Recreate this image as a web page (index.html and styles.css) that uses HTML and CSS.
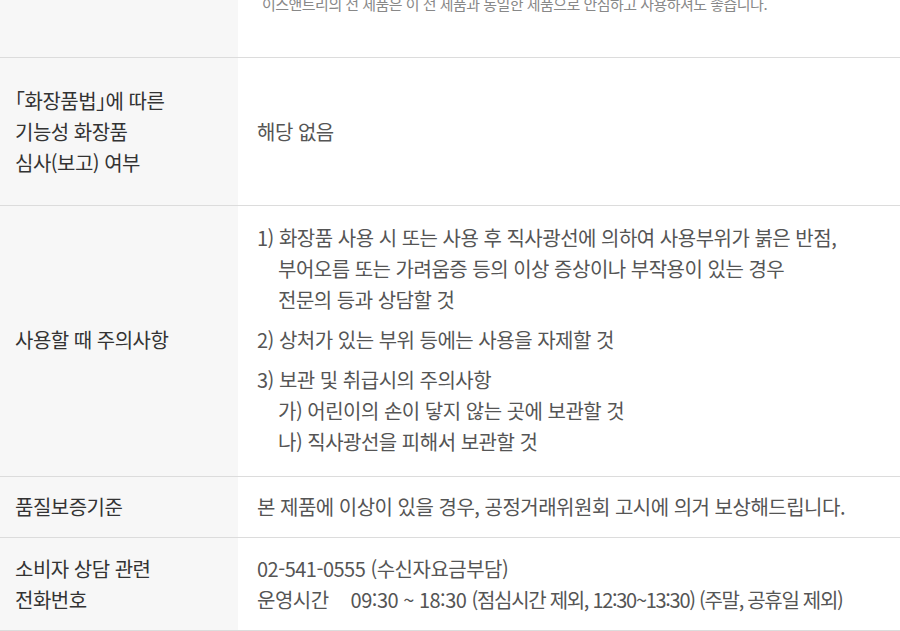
FILE: index.html
```html
<!DOCTYPE html>
<html lang="ko">
<head>
<meta charset="utf-8">
<link rel="stylesheet" href="styles.css">
</head>
<body>
<div class="table">
  <div class="row row-first">
    <div class="th"></div>
    <div class="td td-note">이스앤트리의 전 제품은 이 전 제품과 동일한 제품으로 안심하고 사용하셔도 좋습니다.</div>
  </div>
  <div class="row row-func">
    <div class="th"><div><span class="halt">「</span>화장품법<span class="halt">」</span>에 따른<br>기능성 화장품<br>심사(보고) 여부</div></div>
    <div class="td td-center">해당 없음</div>
  </div>
  <div class="row row-caution">
    <div class="th"><div>사용할 때 주의사항</div></div>
    <div class="td">
      <p class="item">1) 화장품 사용 시 또는 사용 후 직사광선에 의하여 사용부위가 붉은 반점,<br><span class="ind">부어오름 또는 가려움증 등의 이상 증상이나 부작용이 있는 경우</span><br><span class="ind">전문의 등과 상담할 것</span></p>
      <p class="item">2) 상처가 있는 부위 등에는 사용을 자제할 것</p>
      <p class="item">3) 보관 및 취급시의 주의사항<br><span class="ind">가) 어린이의 손이 닿지 않는 곳에 보관할 것</span><br><span class="ind">나) 직사광선을 피해서 보관할 것</span></p>
    </div>
  </div>
  <div class="row row-quality">
    <div class="th"><div>품질보증기준</div></div>
    <div class="td">본 제품에 이상이 있을 경우, 공정거래위원회 고시에 의거 보상해드립니다.</div>
  </div>
  <div class="row row-contact">
    <div class="th"><div>소비자 상담 관련<br>전화번호</div></div>
    <div class="td">02-541-0555 (수신자요금부담)<br><span class="label">운영시간</span>09:30 ~ 18:30 <span class="tight">(점심시간 제외, 12:30~13:30) (주말, 공휴일 제외)</span></div>
  </div>
</div>
</body>
</html>
```
FILE: styles.css
```css
html, body {
  margin: 0;
  padding: 0;
  background: #fff;
}
body {
  width: 900px;
  height: 631px;
  overflow: hidden;
  font-family: "Noto Sans CJK KR", "Noto Sans", sans-serif;
  font-size: 20px;
  letter-spacing: -0.025em;
}
.table {
  margin-top: -7px;
}
.row {
  display: grid;
  grid-template-columns: 238px 1fr;
  border-bottom: 1px solid #dcdcdc;
}
.th {
  background: #f7f7f7;
  color: #333;
  padding: 0 15px;
  line-height: 31px;
  display: flex;
  align-items: center;
}
.halt {
  font-feature-settings: "halt";
}
.td {
  color: #555;
  padding: 0 19px;
  line-height: 31px;
  white-space: nowrap;
}
.td-note {
  font-size: 15px;
  line-height: 22px;
  color: #888;
  padding: 0 19px 42px 24px;
  letter-spacing: -0.035em;
}
.td-center {
  display: flex;
  align-items: center;
}
.row-func > div {
  padding-top: 27px;
  padding-bottom: 27px;
}
.row-caution > div {
  padding-top: 16px;
  padding-bottom: 19px;
}
.item {
  margin: 0 0 9px;
}
.item:last-child {
  margin-bottom: 0;
}
.ind {
  padding-left: 21px;
}
.row-quality > div {
  padding-top: 14px;
  padding-bottom: 15px;
}
.row-contact > div {
  padding-top: 15px;
  padding-bottom: 15px;
}
.label {
  margin-right: 22px;
}
.tight {
  letter-spacing: -0.065em;
}
```
